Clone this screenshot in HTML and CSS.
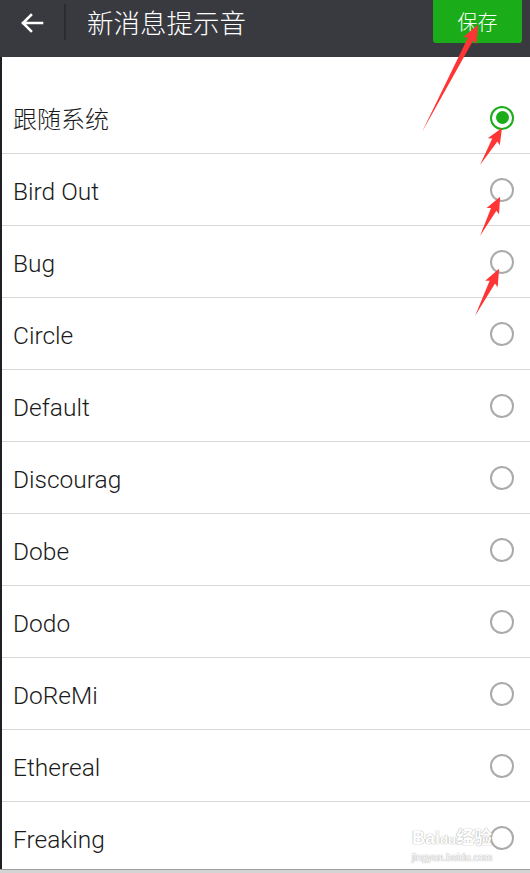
FILE: index.html
```html
<!DOCTYPE html>
<html lang="zh-CN">
<head>
  <meta charset="UTF-8" />
  <meta name="viewport" content="width=device-width, initial-scale=1" />
  <title>新消息提示音</title>
  <link rel="stylesheet" href="styles.css">
</head>
<body>
  <div class="screen">
    <div class="header">
      <div class="back">
        <svg width="24" height="20" viewBox="0 0 24 20">
          <path d="M22 10H3M11 2L3 10l8 8" fill="none" stroke="#fff" stroke-width="2.6" stroke-linecap="square"/>
        </svg>
      </div>
      <div class="divider"></div>
      <div class="title">新消息提示音</div>
      <button class="save">保存</button>
    </div>

    <div class="content">
      <div class="row"><span class="name cjk">跟随系统</span><span class="radio checked"></span></div>
      <div class="row"><span class="name">Bird Out</span><span class="radio"></span></div>
      <div class="row"><span class="name">Bug</span><span class="radio"></span></div>
      <div class="row"><span class="name">Circle</span><span class="radio"></span></div>
      <div class="row"><span class="name">Default</span><span class="radio"></span></div>
      <div class="row"><span class="name">Discourag</span><span class="radio"></span></div>
      <div class="row"><span class="name">Dobe</span><span class="radio"></span></div>
      <div class="row"><span class="name">Dodo</span><span class="radio"></span></div>
      <div class="row"><span class="name">DoReMi</span><span class="radio"></span></div>
      <div class="row"><span class="name">Ethereal</span><span class="radio"></span></div>
      <div class="row"><span class="name">Freaking</span><span class="radio"></span></div>
    </div>

    <!-- red annotation arrows drawn over the screenshot -->
    <svg class="marks" width="530" height="873" viewBox="0 0 530 873">
      <g fill="#ff3434">
        <polygon transform="translate(422,132) rotate(-62.4)" points="0,0 105,-3 103,-7.5 121,0 103,7.5 105,3"/>
        <polygon transform="translate(480,165) rotate(-59.3)" points="0,0 29,-3 27,-7 43,0 27,7 29,3"/>
        <polygon transform="translate(480,236) rotate(-62.8)" points="0,0 30,-3 28,-7 44,0 28,7 30,3"/>
        <polygon transform="translate(475,316) rotate(-62.9)" points="0,0 38,-3 36,-7 53,0 36,7 38,3"/>
      </g>
    </svg>

    <div class="watermark">
      <div class="wm-logo">Bai<span class="wm-du">du</span>经验</div>
      <div class="wm-url">jingyan.baidu.com</div>
    </div>
  </div>
</body>
</html>
```

FILE: styles.css
```css
body {
  margin: 0;
  background: #d4d4d4;
  font-family: Roboto, "Noto Sans CJK SC", sans-serif;
}
.screen {
  position: relative;
  width: 530px;
  height: 869px;
  overflow: hidden;
  background: #fff;
  border-bottom: 1px solid #9c9c9c;
}
.header {
  display: flex;
  align-items: flex-start;
  height: 57px;
  background: #393a3f;
}
.back {
  display: flex;
  align-items: center;
  justify-content: center;
  width: 64px;
  height: 46px;
}
.divider {
  width: 2px;
  height: 36px;
  margin-top: 4px;
  background: #2b2c30;
}
.title {
  margin-left: 21px;
  line-height: 44px;
  font-size: 26.5px;
  font-weight: 300;
  color: #fff;
  font-family: "Noto Sans CJK SC", sans-serif;
}
.save {
  margin-left: auto;
  margin-right: 8px;
  width: 89px;
  height: 43px;
  border: none;
  border-radius: 0 0 3px 3px;
  background: #1aad19;
  color: #fff;
  font-size: 20px;
  font-weight: 300;
  font-family: "Noto Sans CJK SC", sans-serif;
  padding: 0;
}
.content {
  border-left: 2px solid #1e2026;
  padding-top: 25px;
  height: 100%;
}
.row {
  display: flex;
  align-items: center;
  justify-content: space-between;
  height: 71px;
  padding: 0 16px 0 11px;
  border-bottom: 1px solid #d9d9d9;
}
.name {
  padding-top: 3px;
  font-size: 24.5px;
  font-weight: 300;
  color: #1a1a1a;
}
.name.cjk {
  padding-top: 0;
  font-size: 24px;
  font-family: "Noto Sans CJK SC", sans-serif;
}
.radio {
  width: 20px;
  height: 20px;
  border: 2px solid #aaa;
  border-radius: 50%;
  display: flex;
  align-items: center;
  justify-content: center;
}
.radio.checked {
  border-color: #1aad19;
}
.radio.checked::after {
  content: "";
  width: 13px;
  height: 13px;
  border-radius: 50%;
  background: #1aad19;
}
.marks {
  position: absolute;
  left: 0;
  top: 0;
  pointer-events: none;
}
.watermark {
  position: absolute;
  left: 403px;
  top: 826px;
  width: 98px;
  color: #fff;
  text-shadow: 0 0 1px #aaa, 0 0 1px #aaa;
  text-align: center;
  font-family: "Liberation Sans", "Noto Sans CJK SC", sans-serif;
}
.wm-logo {
  font-size: 18px;
  font-weight: bold;
  line-height: 24px;
}
.wm-du {
  font-size: 13px;
}
.wm-url {
  font-size: 10px;
  line-height: 12px;
}
```
